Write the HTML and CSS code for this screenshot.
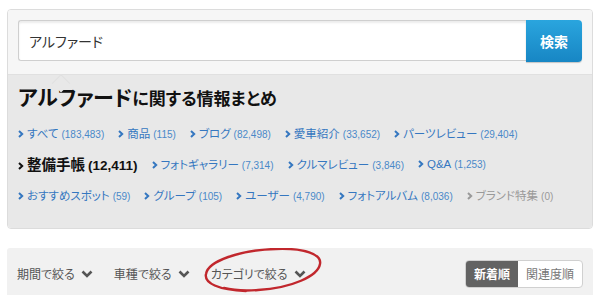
FILE: index.html
```html
<!DOCTYPE html>
<html lang="ja">
<head>
  <meta charset="UTF-8" />
  <title>アルファードに関する情報まとめ</title>
  <link rel="stylesheet" href="styles.css">
</head>
<body>
  <div class="panel">
    <div class="search">
      <div class="search-input">アルファード</div>
      <button class="search-btn">検索</button>
    </div>

    <div class="summary">
      <h1><span class="keyword">アルファード</span>に関する情報まとめ</h1>

      <div class="link-row">
        <a class="cat" href="#"><svg class="arr" viewBox="0 0 6 8"><path d="M1 1l3.2 3L1 7" /></svg>すべて<span class="num">(183,483)</span></a>
        <a class="cat" href="#"><svg class="arr" viewBox="0 0 6 8"><path d="M1 1l3.2 3L1 7" /></svg>商品<span class="num">(115)</span></a>
        <a class="cat" href="#"><svg class="arr" viewBox="0 0 6 8"><path d="M1 1l3.2 3L1 7" /></svg>ブログ<span class="num">(82,498)</span></a>
        <a class="cat" href="#"><svg class="arr" viewBox="0 0 6 8"><path d="M1 1l3.2 3L1 7" /></svg>愛車紹介<span class="num">(33,652)</span></a>
        <a class="cat" href="#"><svg class="arr" viewBox="0 0 6 8"><path d="M1 1l3.2 3L1 7" /></svg>パーツレビュー<span class="num">(29,404)</span></a>
      </div>
      <div class="link-row">
        <a class="cat current" href="#"><svg class="arr" viewBox="0 0 6 8"><path d="M1 1l3.2 3L1 7" /></svg>整備手帳<span class="num">(12,411)</span></a>
        <a class="cat" href="#"><svg class="arr" viewBox="0 0 6 8"><path d="M1 1l3.2 3L1 7" /></svg>フォトギャラリー<span class="num">(7,314)</span></a>
        <a class="cat" href="#"><svg class="arr" viewBox="0 0 6 8"><path d="M1 1l3.2 3L1 7" /></svg>クルマレビュー<span class="num">(3,846)</span></a>
        <a class="cat" href="#"><svg class="arr" viewBox="0 0 6 8"><path d="M1 1l3.2 3L1 7" /></svg>Q&amp;A<span class="num">(1,253)</span></a>
      </div>
      <div class="link-row">
        <a class="cat" href="#"><svg class="arr" viewBox="0 0 6 8"><path d="M1 1l3.2 3L1 7" /></svg>おすすめスポット<span class="num">(59)</span></a>
        <a class="cat" href="#"><svg class="arr" viewBox="0 0 6 8"><path d="M1 1l3.2 3L1 7" /></svg>グループ<span class="num">(105)</span></a>
        <a class="cat" href="#"><svg class="arr" viewBox="0 0 6 8"><path d="M1 1l3.2 3L1 7" /></svg>ユーザー<span class="num">(4,790)</span></a>
        <a class="cat" href="#"><svg class="arr" viewBox="0 0 6 8"><path d="M1 1l3.2 3L1 7" /></svg>フォトアルバム<span class="num">(8,036)</span></a>
        <a class="cat empty" href="#"><svg class="arr" viewBox="0 0 6 8"><path d="M1 1l3.2 3L1 7" /></svg>ブランド特集<span class="num">(0)</span></a>
      </div>
    </div>
  </div>

  <div class="filter-bar">
    <div class="filters">
      <span class="filter">期間で絞る<svg class="down" viewBox="0 0 12 8"><path d="M1.5 1.5L6 6l4.5-4.5" /></svg></span>
      <span class="filter">車種で絞る<svg class="down" viewBox="0 0 12 8"><path d="M1.5 1.5L6 6l4.5-4.5" /></svg></span>
      <span class="filter">カテゴリで絞る<svg class="down" viewBox="0 0 12 8"><path d="M1.5 1.5L6 6l4.5-4.5" /></svg></span>
    </div>
    <div class="sort">
      <span class="sort-btn active">新着順</span>
      <span class="sort-btn">関連度順</span>
    </div>
    <svg class="circle-mark" viewBox="0 0 125 46">
      <path d="M44 43 C16 42 2 35 4 26 C6 13 38 2 74 1 C102 0 120 6 118 16 C116 28 90 40 56 42 C42 43 30 42 22 40" />
    </svg>
  </div>
</body>
</html>
```

FILE: styles.css
```css
body {
  margin: 0;
  padding: 9px 7px 0;
  font-family: "Liberation Sans", "Noto Sans CJK JP", sans-serif;
  font-feature-settings: "palt";
  background: #fff;
  color: #333;
}
.panel {
  border: 1px solid #dcdcdc;
  border-radius: 4px;
  overflow: hidden;
}
.search {
  display: flex;
  padding: 10px 10px 12px;
  background: #f6f6f6;
  border-bottom: 1px solid #e0e0e0;
}
.search-input {
  flex: 1;
  height: 41px;
  box-sizing: border-box;
  padding: 0 10px;
  display: flex;
  align-items: center;
  font-size: 14px;
  color: #333;
  background: #fff;
  border: 1px solid #cfcfcf;
  border-right: none;
  border-radius: 3px 0 0 3px;
  box-shadow: inset 0 2px 2px rgba(0,0,0,0.08);
}
.search-btn {
  width: 56px;
  height: 42px;
  border: none;
  border-radius: 0 4px 4px 0;
  background: linear-gradient(#2aa5de, #1786c4);
  color: #fff;
  font-family: inherit;
  font-size: 14px;
  font-weight: bold;
  box-shadow: 0 1px 1px rgba(0,0,0,0.2);
}
.summary {
  position: relative;
  background: #e8e8e8;
  padding: 9px 10px 18px;
}
.summary::before {
  content: "";
  position: absolute;
  left: 53px;
  top: -1px;
  width: 12px;
  height: 12px;
  background: #e8e8e8;
  border-left: 1px solid #e0e0e0;
  border-top: 1px solid #e0e0e0;
  transform: rotate(45deg);
  transform-origin: 0 0;
}
h1 {
  margin: 0 0 3px;
  font-size: 17px;
  line-height: 28px;
  font-weight: bold;
  color: #111;
}
.keyword {
  font-size: 21px;
}
.link-row {
  display: flex;
  align-items: center;
  gap: 14px;
  height: 31px;
}
.cat {
  display: flex;
  align-items: baseline;
  color: #3577c0;
  font-size: 11.5px;
  text-decoration: none;
  white-space: nowrap;
}
.arr {
  width: 6px;
  height: 8px;
  margin-right: 3px;
  fill: none;
  stroke: currentColor;
  stroke-width: 2;
}
.num {
  margin-left: 3px;
  font-size: 10px;
  color: #4a88c8;
}
.cat.current {
  color: #111;
  font-size: 14.5px;
  font-weight: bold;
}
.cat.current .num {
  font-size: 13.5px;
  color: #111;
}
.cat.empty,
.cat.empty .num {
  color: #999;
}
.filter-bar {
  position: relative;
  margin-top: 19px;
  height: 50px;
  background: #f1f1f1;
  display: flex;
  align-items: center;
  justify-content: space-between;
  padding: 0 10px;
  border-radius: 3px 3px 0 0;
}
.filters {
  display: flex;
  gap: 21px;
  padding-top: 1px;
}
.filter {
  display: flex;
  align-items: center;
  font-size: 12px;
  color: #555;
}
.down {
  width: 12px;
  height: 8px;
  margin-left: 6px;
  fill: none;
  stroke: #555;
  stroke-width: 2.6;
}
.sort {
  display: flex;
  height: 28px;
  border: 1px solid #d0d0d0;
  border-radius: 4px;
  overflow: hidden;
  background: #fff;
  box-sizing: border-box;
  margin-top: 1px;
}
.sort-btn {
  display: flex;
  align-items: center;
  justify-content: center;
  width: 64px;
  font-size: 12px;
  color: #777;
}
.sort-btn.active {
  width: 52px;
  background: #636363;
  color: #fff;
  font-weight: bold;
}
.circle-mark {
  position: absolute;
  left: 195px;
  top: 0;
  width: 125px;
  height: 46px;
  fill: none;
  stroke: #c1272d;
  stroke-width: 2.4;
  stroke-linecap: round;
}
```
